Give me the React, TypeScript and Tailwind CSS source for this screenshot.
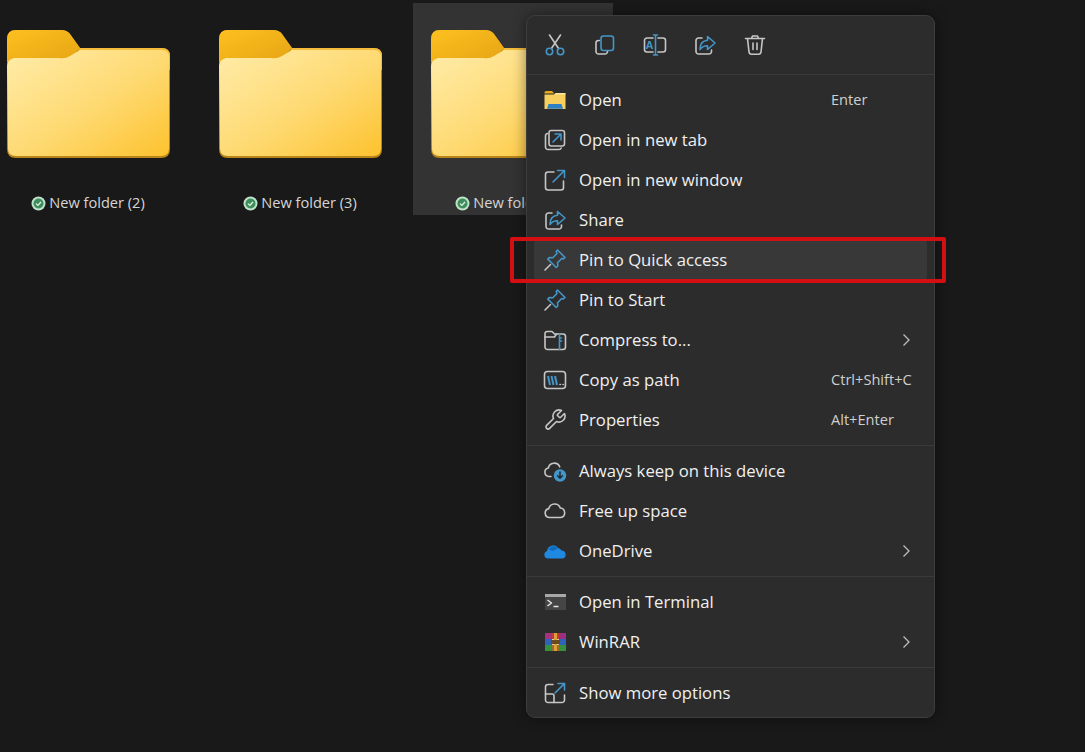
import type { ReactNode } from 'react';

const GRAY = '#c6c6c6';
const BLUE = '#4596c8';

interface IconProps {
  children: ReactNode;
  size?: number;
}

const Icon = ({ children, size = 24 }: IconProps) => (
  <svg width={size} height={size} viewBox="0 0 24 24" fill="none" strokeWidth={1.6} strokeLinecap="round" strokeLinejoin="round" className="shrink-0">
    {children}
  </svg>
);

const CutIcon = () => (
  <Icon>
    <path d="M6.5 2 15.6 15.5M17.5 2 8.4 15.5" stroke={GRAY} />
    <circle cx="6.5" cy="18.5" r="3.2" stroke={BLUE} />
    <circle cx="17.5" cy="18.5" r="3.2" stroke={BLUE} />
  </Icon>
);

const CopyIcon = () => (
  <Icon>
    <path d="M6.5 7.5H5.5A2.5 2.5 0 0 0 3 10v8.5A2.5 2.5 0 0 0 5.5 21H12a2.5 2.5 0 0 0 2.5-2.5V18" stroke={GRAY} />
    <rect x="8" y="3" width="12.5" height="14.5" rx="2.5" stroke={BLUE} />
  </Icon>
);

const RenameIcon = () => (
  <Icon>
    <path d="M10 5H4a2.5 2.5 0 0 0-2.5 2.5v9A2.5 2.5 0 0 0 4 19h6M15 5h5a2.5 2.5 0 0 1 2.5 2.5v9A2.5 2.5 0 0 1 20 19h-5" stroke={GRAY} />
    <path d="M12.5 2v20M10.5 2h4M10.5 22h4" stroke={BLUE} />
    <text x="6.4" y="16" fontSize="11" fontWeight="600" fontFamily="'Liberation Sans', sans-serif" textAnchor="middle" fill={BLUE}>A</text>
  </Icon>
);

const ShareIcon = () => (
  <Icon>
    <path d="M9 5H5.5A2.5 2.5 0 0 0 3 7.5v11A2.5 2.5 0 0 0 5.5 21H16a2.5 2.5 0 0 0 2.5-2.5V17" stroke={GRAY} />
    <path d="M14.5 3.5 22 10l-7.5 6.5v-3.8c-3.4 0-5.6 1-7.5 3.8 0-5.2 2.6-8.8 7.5-9.2Z" stroke={BLUE} />
  </Icon>
);

const TrashIcon = () => (
  <Icon>
    <path d="M2.5 5.5h19M8.5 5.5 9.5 3h5l1 2.5M4.5 5.5 6 19a2.5 2.5 0 0 0 2.5 2.2h7A2.5 2.5 0 0 0 18 19l1.5-13.5M10 10v6.5M14 10v6.5" stroke={GRAY} />
  </Icon>
);

const FolderSmallIcon = () => (
  <Icon>
    <path d="M1.5 4.5A1.5 1.5 0 0 1 3 3h6l2.5 2.5H1.5Z" fill="#e8a91b" />
    <path d="M1.5 21V6.5H11l2-1.5h8a1.5 1.5 0 0 1 1.5 1.5V21Z" fill="#f7cf5e" />
    <path d="M4 20.8 5.5 16h13l1.5 4.8Z" fill="#2f7fc4" />
    <path d="M1.5 6.5H11l2-1.5h9.5v1.5" fill="#fce79c" />
  </Icon>
);

const NewTabIcon = () => (
  <Icon>
    <path d="M4.5 5.5A2.5 2.5 0 0 0 2.5 8v11A2.5 2.5 0 0 0 5 21.5h11a2.5 2.5 0 0 0 2.2-1.5" stroke={GRAY} />
    <rect x="6" y="2.5" width="15.5" height="15.5" rx="2.2" stroke={GRAY} />
    <path d="M10 14 17.5 6.5M12 6h6v6" stroke={BLUE} />
  </Icon>
);

const NewWindowIcon = () => (
  <Icon>
    <path d="M11 4H5a2.5 2.5 0 0 0-2.5 2.5v13A2.5 2.5 0 0 0 5 22h13a2.5 2.5 0 0 0 2.5-2.5V13" stroke={GRAY} />
    <path d="M10 14 21 3M14.5 2.5h7v7" stroke={BLUE} />
  </Icon>
);

const PinIcon = () => (
  <Icon>
    <path d="M14.5 2 22 9.5l-1.6 1.4-1.7-.4-4.2 4.2.3 3.3-1.6 1.5-4.2-4.2-4.2-4.2L6.3 9.5l3.5.2L14 5.5l-.8-2Z" stroke={BLUE} />
    <path d="M7.5 16.5 2 22" stroke={GRAY} />
  </Icon>
);

const CompressIcon = () => (
  <Icon>
    <path d="M2 7V5.5A2 2 0 0 1 4 3.5h5l2.5 2.5H20a2.5 2.5 0 0 1 2.5 2.5V19a2.5 2.5 0 0 1-2.5 2.5H4.5A2.5 2.5 0 0 1 2 19Z" stroke={GRAY} />
    <path d="M2 9h9.5l2-3" stroke={GRAY} />
    <path d="M16.5 6.5v15M18.5 10h-2M18.5 13h-2" stroke={BLUE} />
  </Icon>
);

const PathIcon = () => (
  <Icon>
    <rect x="1.5" y="3.5" width="21" height="17" rx="3" stroke={GRAY} />
    <path d="M5 8l2 9M8.5 8l2 9M12 8l2 9" stroke={BLUE} strokeWidth={2} strokeLinecap="butt" />
    <path d="M17 16.5h.4M20 16.5h.4" stroke={GRAY} />
  </Icon>
);

const WrenchIcon = () => (
  <Icon>
    <path d="M14.7 6.3a1 1 0 0 0 0 1.4l1.6 1.6a1 1 0 0 0 1.4 0l3.77-3.77a6 6 0 0 1-7.94 7.94l-6.91 6.91a2.12 2.12 0 0 1-3-3l6.91-6.91a6 6 0 0 1 7.94-7.94l-3.76 3.76Z" stroke={GRAY} />
  </Icon>
);

const CloudPath = 'M6.5 18.5A4.5 4.5 0 0 1 5.8 9.6 6 6 0 0 1 17.3 9a4.8 4.8 0 0 1 .4 9.5Z';

const KeepIcon = () => (
  <Icon>
    <path d="M8 17.5H6A4.3 4.3 0 0 1 5.3 9 6 6 0 0 1 16.7 7.8" stroke={GRAY} />
    <circle cx="17" cy="16.5" r="6.2" fill={BLUE} />
    <path d="M17 13v6M14.6 16.8 17 19.2l2.4-2.4" stroke="#1f2a33" strokeWidth={1.5} />
  </Icon>
);

const CloudIcon = () => (
  <Icon>
    <path d={CloudPath} stroke={GRAY} />
  </Icon>
);

const OneDriveIcon = () => (
  <Icon>
    <path d="M5 19.5a3.8 3.8 0 0 1-1-7.4A6.2 6.2 0 0 1 15.2 9a4.8 4.8 0 0 1 3.2 2.4 4.2 4.2 0 0 1 1.6 8.1Z" fill="#1f88e0" />
    <path d="M5.5 10.5A6.2 6.2 0 0 1 15.2 9l-5 3Z" fill="#0f6cbd" />
  </Icon>
);

const TerminalIcon = () => (
  <Icon>
    <rect x="2" y="4" width="21" height="16" fill="#454545" />
    <rect x="2" y="4" width="21" height="3" fill="#a8a8a8" />
    <path d="M4.5 10 8.5 13 4.5 16" stroke="#e4e4e4" strokeWidth={1.5} strokeLinecap="butt" />
    <path d="M10.5 16.5h5" stroke="#e4e4e4" strokeWidth={1.5} strokeLinecap="butt" />
  </Icon>
);

const WinRarIcon = () => (
  <Icon>
    <rect x="2" y="3" width="7" height="6" fill="#a3337c" />
    <rect x="9" y="3" width="7" height="6" fill="#c8363b" />
    <rect x="16" y="3" width="7" height="6" fill="#9a2f80" />
    <rect x="2" y="9" width="7" height="6" fill="#2f63b8" />
    <rect x="9" y="9" width="7" height="6" fill="#d9cfa8" />
    <rect x="16" y="9" width="7" height="6" fill="#2f63b8" />
    <rect x="2" y="15" width="7" height="6" fill="#34923f" />
    <rect x="9" y="15" width="7" height="6" fill="#a56a2a" />
    <rect x="16" y="15" width="7" height="6" fill="#34923f" />
    <rect x="11" y="3" width="3" height="18" fill="#d8a23a" />
    <rect x="8" y="10" width="9" height="4" fill="#6b4a22" />
  </Icon>
);

const MoreIcon = () => (
  <Icon>
    <path d="M10 3.5H5A2.5 2.5 0 0 0 2.5 6v13A2.5 2.5 0 0 0 5 21.5h14a2.5 2.5 0 0 0 2.5-2.5v-5" stroke={GRAY} />
    <path d="M2.5 13H9a2 2 0 0 1 2 2v6.5" stroke={GRAY} />
    <path d="M12 12 21 3M15 2.5h6.5V9" stroke={BLUE} />
  </Icon>
);

const Chevron = () => (
  <svg width="9" height="14" viewBox="0 0 9 14" fill="none" stroke="#bdbdbd" strokeWidth="1.3">
    <path d="M1.5 1.5 7 7l-5.5 5.5" />
  </svg>
);

const FolderArt = ({ id }: { id: string }) => (
  <svg width="163" height="128" viewBox="0 0 163 128" className="mr-px shrink-0">
    <defs>
      <linearGradient id={`${id}-tab`} x1="0" y1="0" x2="1" y2="1">
        <stop offset="0" stopColor="#fdc01f" />
        <stop offset="1" stopColor="#e6a414" />
      </linearGradient>
      <linearGradient id={`${id}-front`} x1="0" y1="0" x2="1" y2="1">
        <stop offset="0" stopColor="#ffecaa" />
        <stop offset="0.55" stopColor="#fed970" />
        <stop offset="1" stopColor="#fdc22e" />
      </linearGradient>
    </defs>
    <path d="M0 9Q0 0 9 0H54Q60 0 63 4L73 18H155Q163 18 163 26V119Q163 128 154 128H9Q0 128 0 119Z" fill="#b9851a" />
    <path d="M0 9Q0 0 9 0H54Q60 0 63 4L73 18 60 32H0Z" fill={`url(#${id}-tab)`} />
    <path d="M73 18H155Q163 18 163 26V40H60Z" fill="#f4bc3a" />
    <path d="M0 36Q0 30 7 28H52Q58 29 63 26L73 20H155Q162 20 162 27V119Q162 126 154 126H9Q1 126 1 119L0 36Z" fill={`url(#${id}-front)`} />
  </svg>
);

const SyncCheck = () => (
  <svg width="15" height="15" viewBox="0 0 15 15" className="shrink-0">
    <circle cx="7.5" cy="7.5" r="7" fill="#bfe3c8" />
    <circle cx="7.5" cy="7.5" r="5" fill="#3f8f5e" />
    <path d="M5 7.6 6.9 9.4 10 6" fill="none" stroke="#e4f3e8" strokeWidth="1.3" />
  </svg>
);

const folders = [
  { id: 'f2', name: 'New folder (2)', selected: false },
  { id: 'f3', name: 'New folder (3)', selected: false },
  { id: 'f4', name: 'New folder (4)', selected: true },
];

const toolbar = [CutIcon, CopyIcon, RenameIcon, ShareIcon, TrashIcon];

interface MenuItem {
  label: string;
  icon: () => ReactNode;
  shortcut?: string;
  arrow?: boolean;
  hover?: boolean;
}

const groups: MenuItem[][] = [
  [
    { label: 'Open', icon: FolderSmallIcon, shortcut: 'Enter' },
    { label: 'Open in new tab', icon: NewTabIcon },
    { label: 'Open in new window', icon: NewWindowIcon },
    { label: 'Share', icon: ShareIcon },
    { label: 'Pin to Quick access', icon: PinIcon, hover: true },
    { label: 'Pin to Start', icon: PinIcon },
    { label: 'Compress to...', icon: CompressIcon, arrow: true },
    { label: 'Copy as path', icon: PathIcon, shortcut: 'Ctrl+Shift+C' },
    { label: 'Properties', icon: WrenchIcon, shortcut: 'Alt+Enter' },
  ],
  [
    { label: 'Always keep on this device', icon: KeepIcon },
    { label: 'Free up space', icon: CloudIcon },
    { label: 'OneDrive', icon: OneDriveIcon, arrow: true },
  ],
  [
    { label: 'Open in Terminal', icon: TerminalIcon },
    { label: 'WinRAR', icon: WinRarIcon, arrow: true },
  ],
  [{ label: 'Show more options', icon: MoreIcon }],
];

const MenuRow = ({ item }: { item: MenuItem }) => {
  const RowIcon = item.icon;
  return (
    <div className={`flex h-10 items-center rounded pl-[9px] ${item.hover ? 'bg-[#383838]' : ''}`}>
      <RowIcon />
      <span className="ml-[12px] flex-1 text-[16.7px] text-[#f0f0f0]">{item.label}</span>
      {item.shortcut && <span className="w-[96px] text-[14.6px] text-[#cfcfcf]">{item.shortcut}</span>}
      {item.arrow && (
        <span className="pr-[16px]">
          <Chevron />
        </span>
      )}
    </div>
  );
};

export default function App() {
  return (
    <div className="relative h-[752px] w-[1085px] overflow-hidden bg-[#191919] font-['Open_Sans','Liberation_Sans',sans-serif]">
      {/* folder tiles */}
      <div className="ml-[-11px] flex gap-3 pt-[3px]">
        {folders.map((f) => (
          <div key={f.id} className={`flex w-[200px] flex-col items-center pb-[2px] pt-[27px] ${f.selected ? 'bg-[#333333]' : ''}`}>
            <FolderArt id={f.id} />
            <div className="mt-[35px] mr-[2px] flex h-5 items-center gap-[3px] text-[14.6px] text-[#d6d6d6]">
              <SyncCheck />
              <span>{f.name}</span>
            </div>
          </div>
        ))}
      </div>

      {/* context menu */}
      <div className="absolute left-[526px] top-[15px] w-[409px] rounded-[9px] border border-[#3d3d3d] bg-[#2c2c2c] shadow-[0_0_14px_rgba(0,0,0,0.45)]">
        <div className="flex h-[59px] items-center gap-[26px] border-b border-[#3a3a3a] pl-[16px]">
          {toolbar.map((ToolIcon, i) => (
            <ToolIcon key={i} />
          ))}
        </div>
        {groups.map((group, i) => (
          <div key={i} className={`px-[7px] ${i < groups.length - 1 ? 'border-b border-[#3a3a3a] py-[5px]' : 'pb-[4px] pt-[5px]'}`}>
            {group.map((item) => (
              <MenuRow key={item.label} item={item} />
            ))}
          </div>
        ))}
      </div>

      {/* red annotation box */}
      <div className="absolute left-[510px] top-[237px] h-[46px] w-[436px] rounded-[2px] border-[4px] border-[#d40f14]" />
    </div>
  );
}
